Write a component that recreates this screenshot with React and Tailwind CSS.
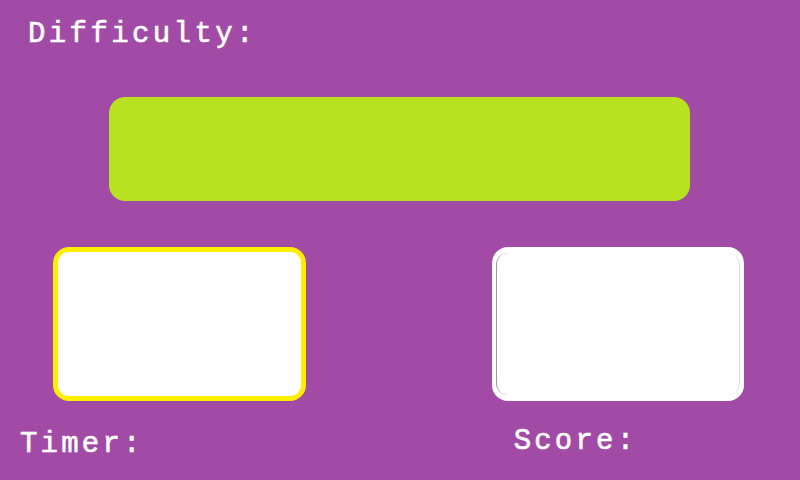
export default function App() {
  const font = { fontFamily: '"Liberation Mono", "DejaVu Sans Mono", monospace' };
  return (
    <div
      className="w-[800px] h-[480px] bg-[#a14ba7] flex flex-col overflow-hidden text-white [-webkit-text-stroke:0.6px_#ffffff]"
      style={font}
    >
      <div className="pt-[20px] pl-[28px] text-[29px] leading-[29px] tracking-[3.4px]">
        Difficulty:
      </div>
      <div className="mt-[48px] ml-[109px] w-[581px] h-[104px] rounded-[16px] bg-[#b8e11f]" />
      <div className="mt-[46px] flex flex-row pl-[53px]">
        <div className="w-[253px] h-[154px] rounded-[16px] border-[5px] border-[#ffee00] bg-white" />
        <div className="ml-[186px] w-[252px] h-[154px] rounded-[16px] bg-white flex px-[4px] py-[6px]">
          <div className="flex-1 rounded-[12px] border-l border-r border-t-0 border-b-0 border-l-[#9a9a9a] border-r-[#dddddd]" />
        </div>
      </div>
      <div className="mt-[26px] flex flex-row items-start text-[29px] leading-[29px] tracking-[3.2px]">
        <div className="mt-[3px] ml-[20px]">Timer:</div>
        <div className="ml-[370px]">Score:</div>
      </div>
    </div>
  );
}
